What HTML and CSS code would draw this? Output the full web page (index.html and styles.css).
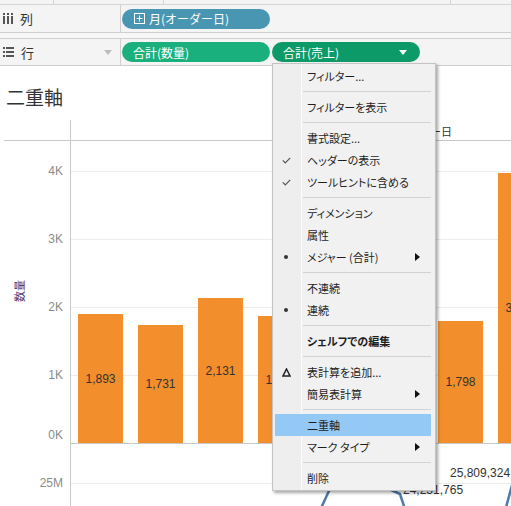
FILE: index.html
```html
<!DOCTYPE html>
<html lang="ja">
<head>
  <meta charset="UTF-8" />
  <title>二重軸</title>
  <link rel="stylesheet" href="styles.css">
</head>
<body>

  <!-- BANDE DU HAUT -->
  <div class="topstrip">
    <div class="ts-a"></div>
    <div class="ts-b"></div>
    <div class="ts-c"></div>
  </div>

  <!-- SHELF : COLONNES -->
  <div class="shelf">
    <div class="shelf-label">
      <svg class="shelf-icon" width="10" height="11" viewBox="0 0 10 11">
        <rect x="0" y="0" width="2" height="2" /><rect x="0" y="3" width="2" height="8" />
        <rect x="4" y="0" width="2" height="2" /><rect x="4" y="3" width="2" height="8" />
        <rect x="8" y="0" width="2" height="2" /><rect x="8" y="3" width="2" height="8" />
      </svg>
      <span>列</span>
    </div>
    <div class="pills">
      <div class="pill pill-dim">
        <svg class="pill-plus" width="11" height="11" viewBox="0 0 11 11">
          <rect x="0.5" y="0.5" width="10" height="10" fill="none" stroke="#fff" />
          <path d="M5.5 2.5v6M2.5 5.5h6" stroke="#fff" />
        </svg>
        月(オーダー日)
      </div>
    </div>
  </div>

  <div class="shelf-gap"></div>

  <!-- SHELF : LIGNES -->
  <div class="shelf shelf-rows">
    <div class="shelf-label">
      <svg class="shelf-icon" width="11" height="10" viewBox="0 0 11 10">
        <rect x="0" y="0" width="2" height="2" /><rect x="3" y="0" width="8" height="2" />
        <rect x="0" y="4" width="2" height="2" /><rect x="3" y="4" width="8" height="2" />
        <rect x="0" y="8" width="2" height="2" /><rect x="3" y="8" width="8" height="2" />
      </svg>
      <span>行</span>
      <svg class="shelf-drop" width="8" height="5" viewBox="0 0 8 5"><path d="M0 0h8L4 5z" /></svg>
    </div>
    <div class="pills">
      <div class="pill pill-measure">合計(数量)</div>
      <div class="pill pill-active">
        合計(売上)
        <svg class="pill-arrow" width="8" height="5" viewBox="0 0 8 5"><path d="M0 0h8L4 5z" /></svg>
      </div>
    </div>
  </div>

  <!-- VUE -->
  <div class="view">
    <div class="title">二重軸</div>

    <div class="chart">
      <div class="axis-head"></div>
      <div class="plot-head"><span class="col-title">オーダー日</span></div>

      <!-- axe du haut : quantité -->
      <div class="axis">
        <span class="measure">数量</span>
        <span class="tick" style="top:30px">4K</span>
        <span class="tick" style="top:98px">3K</span>
        <span class="tick" style="top:166px">2K</span>
        <span class="tick" style="top:234px">1K</span>
        <span class="tick" style="top:294px">0K</span>
      </div>
      <div class="plot plot-upper">
        <div class="grid" style="top:30px"></div>
        <div class="grid" style="top:98px"></div>
        <div class="grid" style="top:166px"></div>
        <div class="grid" style="top:234px"></div>
        <div class="bars">
          <div class="bar" style="height:129px"><span>1,893</span></div>
          <div class="bar" style="height:118px"><span>1,731</span></div>
          <div class="bar" style="height:145px"><span>2,131</span></div>
          <div class="bar" style="height:127px"><span>1,874</span></div>
          <div class="bar" style="height:112px"><span>1,650</span></div>
          <div class="bar" style="height:136px"><span>2,004</span></div>
          <div class="bar" style="height:122px"><span>1,798</span></div>
          <div class="bar" style="height:270px"><span>3,965</span></div>
        </div>
      </div>

      <!-- axe du bas : ventes -->
      <div class="axis">
        <span class="tick" style="top:39px">25M</span>
      </div>
      <div class="plot plot-lower">
        <div class="grid" style="top:39px"></div>
        <svg class="line" width="440" height="62" viewBox="0 0 440 62">
          <polyline points="149,283 209,153 269,23 329,50 389,232 449,12" />
        </svg>
        <span class="mark-label" style="left:379px; top:22px">25,809,324</span>
        <span class="mark-label" style="left:332px; top:39px">24,231,765</span>
      </div>
    </div>
  </div>

  <!-- MENU CONTEXTUEL -->
  <div class="menu">
    <div class="item"><span class="mk"></span><span class="lbl">フィルター...</span></div>
    <div class="sep"></div>
    <div class="item"><span class="mk"></span><span class="lbl">フィルターを表示</span></div>
    <div class="sep"></div>
    <div class="item"><span class="mk"></span><span class="lbl">書式設定...</span></div>
    <div class="item">
      <span class="mk"><svg width="9" height="7" viewBox="0 0 9 7"><path d="M0.8 3.4l2.5 2.6L8.2 0.8" /></svg></span>
      <span class="lbl">ヘッダーの表示</span>
    </div>
    <div class="item">
      <span class="mk"><svg width="9" height="7" viewBox="0 0 9 7"><path d="M0.8 3.4l2.5 2.6L8.2 0.8" /></svg></span>
      <span class="lbl">ツールヒントに含める</span>
    </div>
    <div class="sep"></div>
    <div class="item"><span class="mk"></span><span class="lbl">ディメンション</span></div>
    <div class="item"><span class="mk"></span><span class="lbl">属性</span></div>
    <div class="item">
      <span class="mk"><i class="dot"></i></span>
      <span class="lbl">メジャー (合計)</span>
      <svg class="sub" width="5" height="8" viewBox="0 0 5 8"><path d="M0 0l5 4-5 4z" /></svg>
    </div>
    <div class="sep"></div>
    <div class="item"><span class="mk"></span><span class="lbl">不連続</span></div>
    <div class="item"><span class="mk"><i class="dot"></i></span><span class="lbl">連続</span></div>
    <div class="sep"></div>
    <div class="item"><span class="mk"></span><span class="lbl bold">シェルフでの編集</span></div>
    <div class="sep"></div>
    <div class="item">
      <span class="mk"><svg width="9" height="9" viewBox="0 0 9 9"><path class="delta" d="M4.5 1L8 8H1z" /></svg></span>
      <span class="lbl">表計算を追加...</span>
    </div>
    <div class="item">
      <span class="mk"></span><span class="lbl">簡易表計算</span>
      <svg class="sub" width="5" height="8" viewBox="0 0 5 8"><path d="M0 0l5 4-5 4z" /></svg>
    </div>
    <div class="sep"></div>
    <div class="item hover"><span class="mk"></span><span class="lbl">二重軸</span></div>
    <div class="item">
      <span class="mk"></span><span class="lbl">マーク タイプ</span>
      <svg class="sub" width="5" height="8" viewBox="0 0 5 8"><path d="M0 0l5 4-5 4z" /></svg>
    </div>
    <div class="sep"></div>
    <div class="item"><span class="mk"></span><span class="lbl">削除</span></div>
  </div>

</body>
</html>
```

FILE: styles.css
```css
/* RESET */
* {
  margin: 0;
  padding: 0;
  box-sizing: border-box;
}

html, body {
  width: 511px;
  height: 506px;
  overflow: hidden;
}

body {
  position: relative;
  background: #fff;
  color: #333;
  font-family: "Noto Sans CJK JP", "Noto Sans", sans-serif;
  font-size: 12px;
}

/* BANDE DU HAUT */
.topstrip {
  display: flex;
  height: 5px;
  background: #f4f4f4;
  border-bottom: 1px solid #d4d4d4;
}
.topstrip div {
  border-right: 1px solid #d4d4d4;
}
.ts-a { width: 54px; }
.ts-b { width: 110px; }
.ts-c { width: 287px; }

/* SHELVES */
.shelf {
  display: flex;
  height: 28px;
  background: #f4f4f4;
  border-bottom: 1px solid #d0d0d0;
}
.shelf-rows {
  height: 27px;
}
.shelf-gap {
  height: 6px;
  background: #f7f7f7;
  border-bottom: 1px solid #d0d0d0;
}

.shelf-label {
  display: flex;
  align-items: center;
  width: 121px;
  padding-left: 3px;
  border-right: 1px solid #cfcfcf;
  font-size: 13px;
  color: #333;
}
.shelf-icon {
  fill: #555;
  margin-right: 7px;
}
.shelf-drop {
  fill: #bdbdbd;
  margin-left: auto;
  margin-right: 8px;
}

.pills {
  display: flex;
  align-items: center;
  gap: 2px;
  padding-left: 1px;
}
.pill {
  display: flex;
  align-items: center;
  width: 148px;
  height: 20px;
  border-radius: 10px;
  padding-left: 11px;
  color: #fff;
  font-size: 12px;
  white-space: nowrap;
}
.pill-dim {
  background: #4996b3;
  padding-left: 12px;
}
.pill-plus {
  margin-right: 4px;
}
.pill-measure {
  background: #19b07e;
}
.pill-active {
  background: #0c9a69;
}
.pill-arrow {
  fill: #fff;
  margin-left: auto;
  margin-right: 13px;
}

/* VUE */
.view {
  padding-left: 4px;
}
.title {
  height: 54px;
  padding: 20px 0 0 2px;
  font-size: 19px;
  line-height: 22px;
  color: #333;
}

.chart {
  display: grid;
  grid-template-columns: 66px 1fr;
  grid-template-rows: 21px 303px 62px;
}
.axis-head,
.plot-head {
  border-bottom: 1px solid #c8c8c8;
}
.plot-head {
  position: relative;
  border-left: 1px solid #c8c8c8;
}
.col-title {
  position: absolute;
  left: 326px;
  top: 3px;
  font-size: 11px;
  color: #333;
}

.axis {
  position: relative;
}
.tick {
  position: absolute;
  right: 7px;
  transform: translateY(-50%);
  font-family: "Liberation Sans", Arial, sans-serif;
  font-size: 12px;
  color: #8a8a8a;
}
.measure {
  position: absolute;
  left: 4px;
  top: 142px;
  transform: rotate(-90deg);
  font-size: 11px;
  color: #4a2d6e;
}

.plot {
  position: relative;
  overflow: hidden;
  border-left: 1px solid #c8c8c8;
}
.plot-upper {
  border-bottom: 1px solid #c8c8c8;
}
.grid {
  position: absolute;
  left: 0;
  right: 0;
  height: 1px;
  background: #ececec;
}

.bars {
  position: relative;
  display: flex;
  align-items: flex-end;
  gap: 15px;
  height: 100%;
  padding-left: 7px;
}
.bar {
  flex: 0 0 45px;
  display: flex;
  align-items: center;
  justify-content: center;
  background: #f28e2b;
  font-family: "Liberation Sans", Arial, sans-serif;
  font-size: 12px;
  color: #333;
}

.line {
  position: absolute;
  left: 0;
  top: 0;
}
.line polyline {
  fill: none;
  stroke: #4e79a7;
  stroke-width: 2.5;
}
.mark-label {
  position: absolute;
  font-family: "Liberation Sans", Arial, sans-serif;
  font-size: 12px;
  line-height: 14px;
  color: #333;
  white-space: nowrap;
}

/* MENU CONTEXTUEL */
.menu {
  position: absolute;
  left: 272px;
  top: 63px;
  width: 164px;
  padding: 1px 0;
  border: 1px solid #c4c4c4;
  background: linear-gradient(to right, #eeeeee 0, #eeeeee 28px, #fbfbfb 28px, #fbfbfb 29px, #f1f1f1 29px);
  box-shadow: 2px 2px 3px rgba(0, 0, 0, 0.35);
  font-size: 11px;
  font-feature-settings: "palt";
  color: #1e1e1e;
}
.item {
  display: flex;
  align-items: center;
  height: 22px;
  margin: 0 4px 0 2px;
}
.item.hover {
  background: #94c9f6;
}
.mk {
  display: flex;
  align-items: center;
  justify-content: center;
  width: 22px;
  height: 22px;
}
.mk svg path {
  fill: none;
  stroke: #555;
  stroke-width: 1.2;
}
.mk svg .delta {
  stroke: #222;
  stroke-width: 1.5;
}
.dot {
  display: block;
  width: 4px;
  height: 4px;
  border-radius: 50%;
  background: #333;
}
.lbl {
  flex: 1;
  margin-left: 10px;
  white-space: nowrap;
}
.lbl.bold {
  font-weight: bold;
}
.sub {
  fill: #111;
  margin-right: 11px;
}
.sep {
  height: 1px;
  margin: 4px 4px 4px 30px;
  background: #d2d2d2;
}
```
